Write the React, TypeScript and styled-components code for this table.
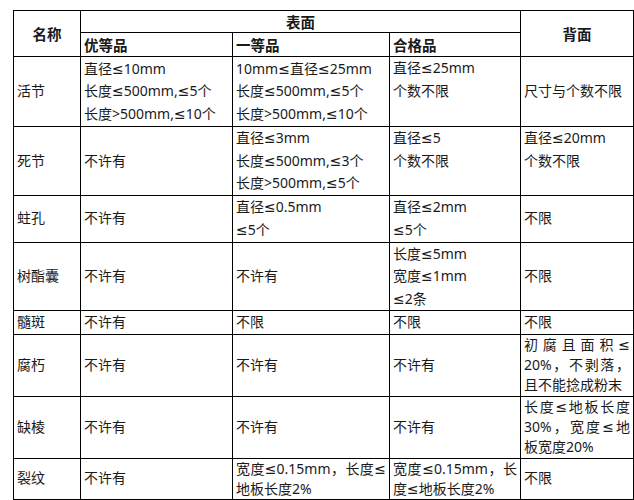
import styled, { createGlobalStyle } from 'styled-components'

const GlobalStyle = createGlobalStyle`
  html, body {
    margin: 0;
    padding: 0;
    background: #fff;
    overflow: hidden;
  }
`

interface Row {
  name: string
  cells: Cell[]
  height: number
}

interface Cell {
  lines: string[]
  top?: boolean
  justify?: boolean
}

const rows: Row[] = [
  {
    name: '活节',
    height: 70,
    cells: [
      { lines: ['直径≤10mm', '长度≤500mm,≤5个', '长度>500mm,≤10个'] },
      { lines: ['10mm≤直径≤25mm', '长度≤500mm,≤5个', '长度>500mm,≤10个'] },
      { lines: ['直径≤25mm', '个数不限'], top: true },
      { lines: ['尺寸与个数不限'] }
    ]
  },
  {
    name: '死节',
    height: 68,
    cells: [
      { lines: ['不许有'] },
      { lines: ['直径≤3mm', '长度≤500mm,≤3个', '长度>500mm,≤5个'] },
      { lines: ['直径≤5', '个数不限'], top: true },
      { lines: ['直径≤20mm', '个数不限'], top: true }
    ]
  },
  {
    name: '蛀孔',
    height: 47,
    cells: [
      { lines: ['不许有'] },
      { lines: ['直径≤0.5mm', '≤5个'] },
      { lines: ['直径≤2mm', '≤5个'] },
      { lines: ['不限'] }
    ]
  },
  {
    name: '树酯囊',
    height: 68,
    cells: [
      { lines: ['不许有'] },
      { lines: ['不许有'] },
      { lines: ['长度≤5mm', '宽度≤1mm', '≤2条'] },
      { lines: ['不限'] }
    ]
  },
  {
    name: '髓斑',
    height: 23,
    cells: [
      { lines: ['不许有'] },
      { lines: ['不限'] },
      { lines: ['不限'] },
      { lines: ['不限'] }
    ]
  },
  {
    name: '腐朽',
    height: 62,
    cells: [
      { lines: ['不许有'] },
      { lines: ['不许有'] },
      { lines: ['不许有'] },
      { lines: ['初腐且面积≤', '20%，不剥落，', '且不能捻成粉末'], justify: true }
    ]
  },
  {
    name: '缺棱',
    height: 62,
    cells: [
      { lines: ['不许有'] },
      { lines: ['不许有'] },
      { lines: ['不许有'] },
      { lines: ['长度≤地板长度', '30%，宽度≤地', '板宽度20%'], justify: true }
    ]
  },
  {
    name: '裂纹',
    height: 41,
    cells: [
      { lines: ['不许有'] },
      { lines: ['宽度≤0.15mm，长度≤', '地板长度2%'], justify: true },
      { lines: ['宽度≤0.15mm，长', '度≤地板长度2%'], justify: true },
      { lines: ['不限'] }
    ]
  }
]

export default function App (): JSX.Element {
  return (
    <>
      <GlobalStyle />
      <Page>
        <Table>
          <colgroup>
            <col style={{ width: 67 }} />
            <col style={{ width: 152 }} />
            <col style={{ width: 157 }} />
            <col style={{ width: 131 }} />
            <col style={{ width: 113 }} />
          </colgroup>
          <thead>
            <TableRow $height={22}>
              <Th rowSpan={2} $center>名称</Th>
              <Th colSpan={3} $center>表面</Th>
              <Th rowSpan={2} $center>背面</Th>
            </TableRow>
            <TableRow $height={24}>
              <Th>优等品</Th>
              <Th>一等品</Th>
              <Th>合格品</Th>
            </TableRow>
          </thead>
          <tbody>
            {rows.map((row) => (
              <TableRow key={row.name} $height={row.height}>
                <Td>
                  <Line>{row.name}</Line>
                </Td>
                {row.cells.map((cell, i) => (
                  <Td key={i} $top={cell.top}>
                    {cell.lines.map((line, j) => (
                      <Line
                        key={j}
                        $justify={cell.justify && j < cell.lines.length - 1}
                        $tight={cell.justify}
                      >
                        {line}
                      </Line>
                    ))}
                  </Td>
                ))}
              </TableRow>
            ))}
          </tbody>
        </Table>
      </Page>
    </>
  )
}

const Page = styled.div`
  padding: 10px 0 0 13px;
  font-family: "Noto Sans", "DejaVu Sans", "Noto Sans CJK SC", sans-serif;
  color: #1a1a1a;
`

const Table = styled.table`
  border-collapse: collapse;
  table-layout: fixed;
  width: 620px;
  font-size: 14px;

  th, td {
    border: 1px solid #000;
  }
`

const TableRow = styled.tr<{ $height: number }>`
  height: ${({ $height }) => $height}px;
`

const Th = styled.th<{ $center?: boolean }>`
  padding: 0 3px;
  font-weight: 700;
  font-size: 14.5px;
  line-height: 20px;
  text-align: ${({ $center }) => ($center ? 'center' : 'left')};
  vertical-align: middle;
`

const Td = styled.td<{ $top?: boolean }>`
  padding: 0 3px;
  text-align: left;
  vertical-align: ${({ $top }) => ($top ? 'top' : 'middle')};
  overflow: hidden;
`

const Line = styled.div<{ $justify?: boolean, $tight?: boolean }>`
  height: ${({ $tight }) => ($tight ? '20px' : '22.5px')};
  line-height: ${({ $tight }) => ($tight ? '20px' : '22.5px')};
  overflow: visible;
  text-align: ${({ $justify }) => ($justify ? 'justify' : 'left')};
  text-align-last: ${({ $justify }) => ($justify ? 'justify' : 'left')};
  white-space: nowrap;
`
